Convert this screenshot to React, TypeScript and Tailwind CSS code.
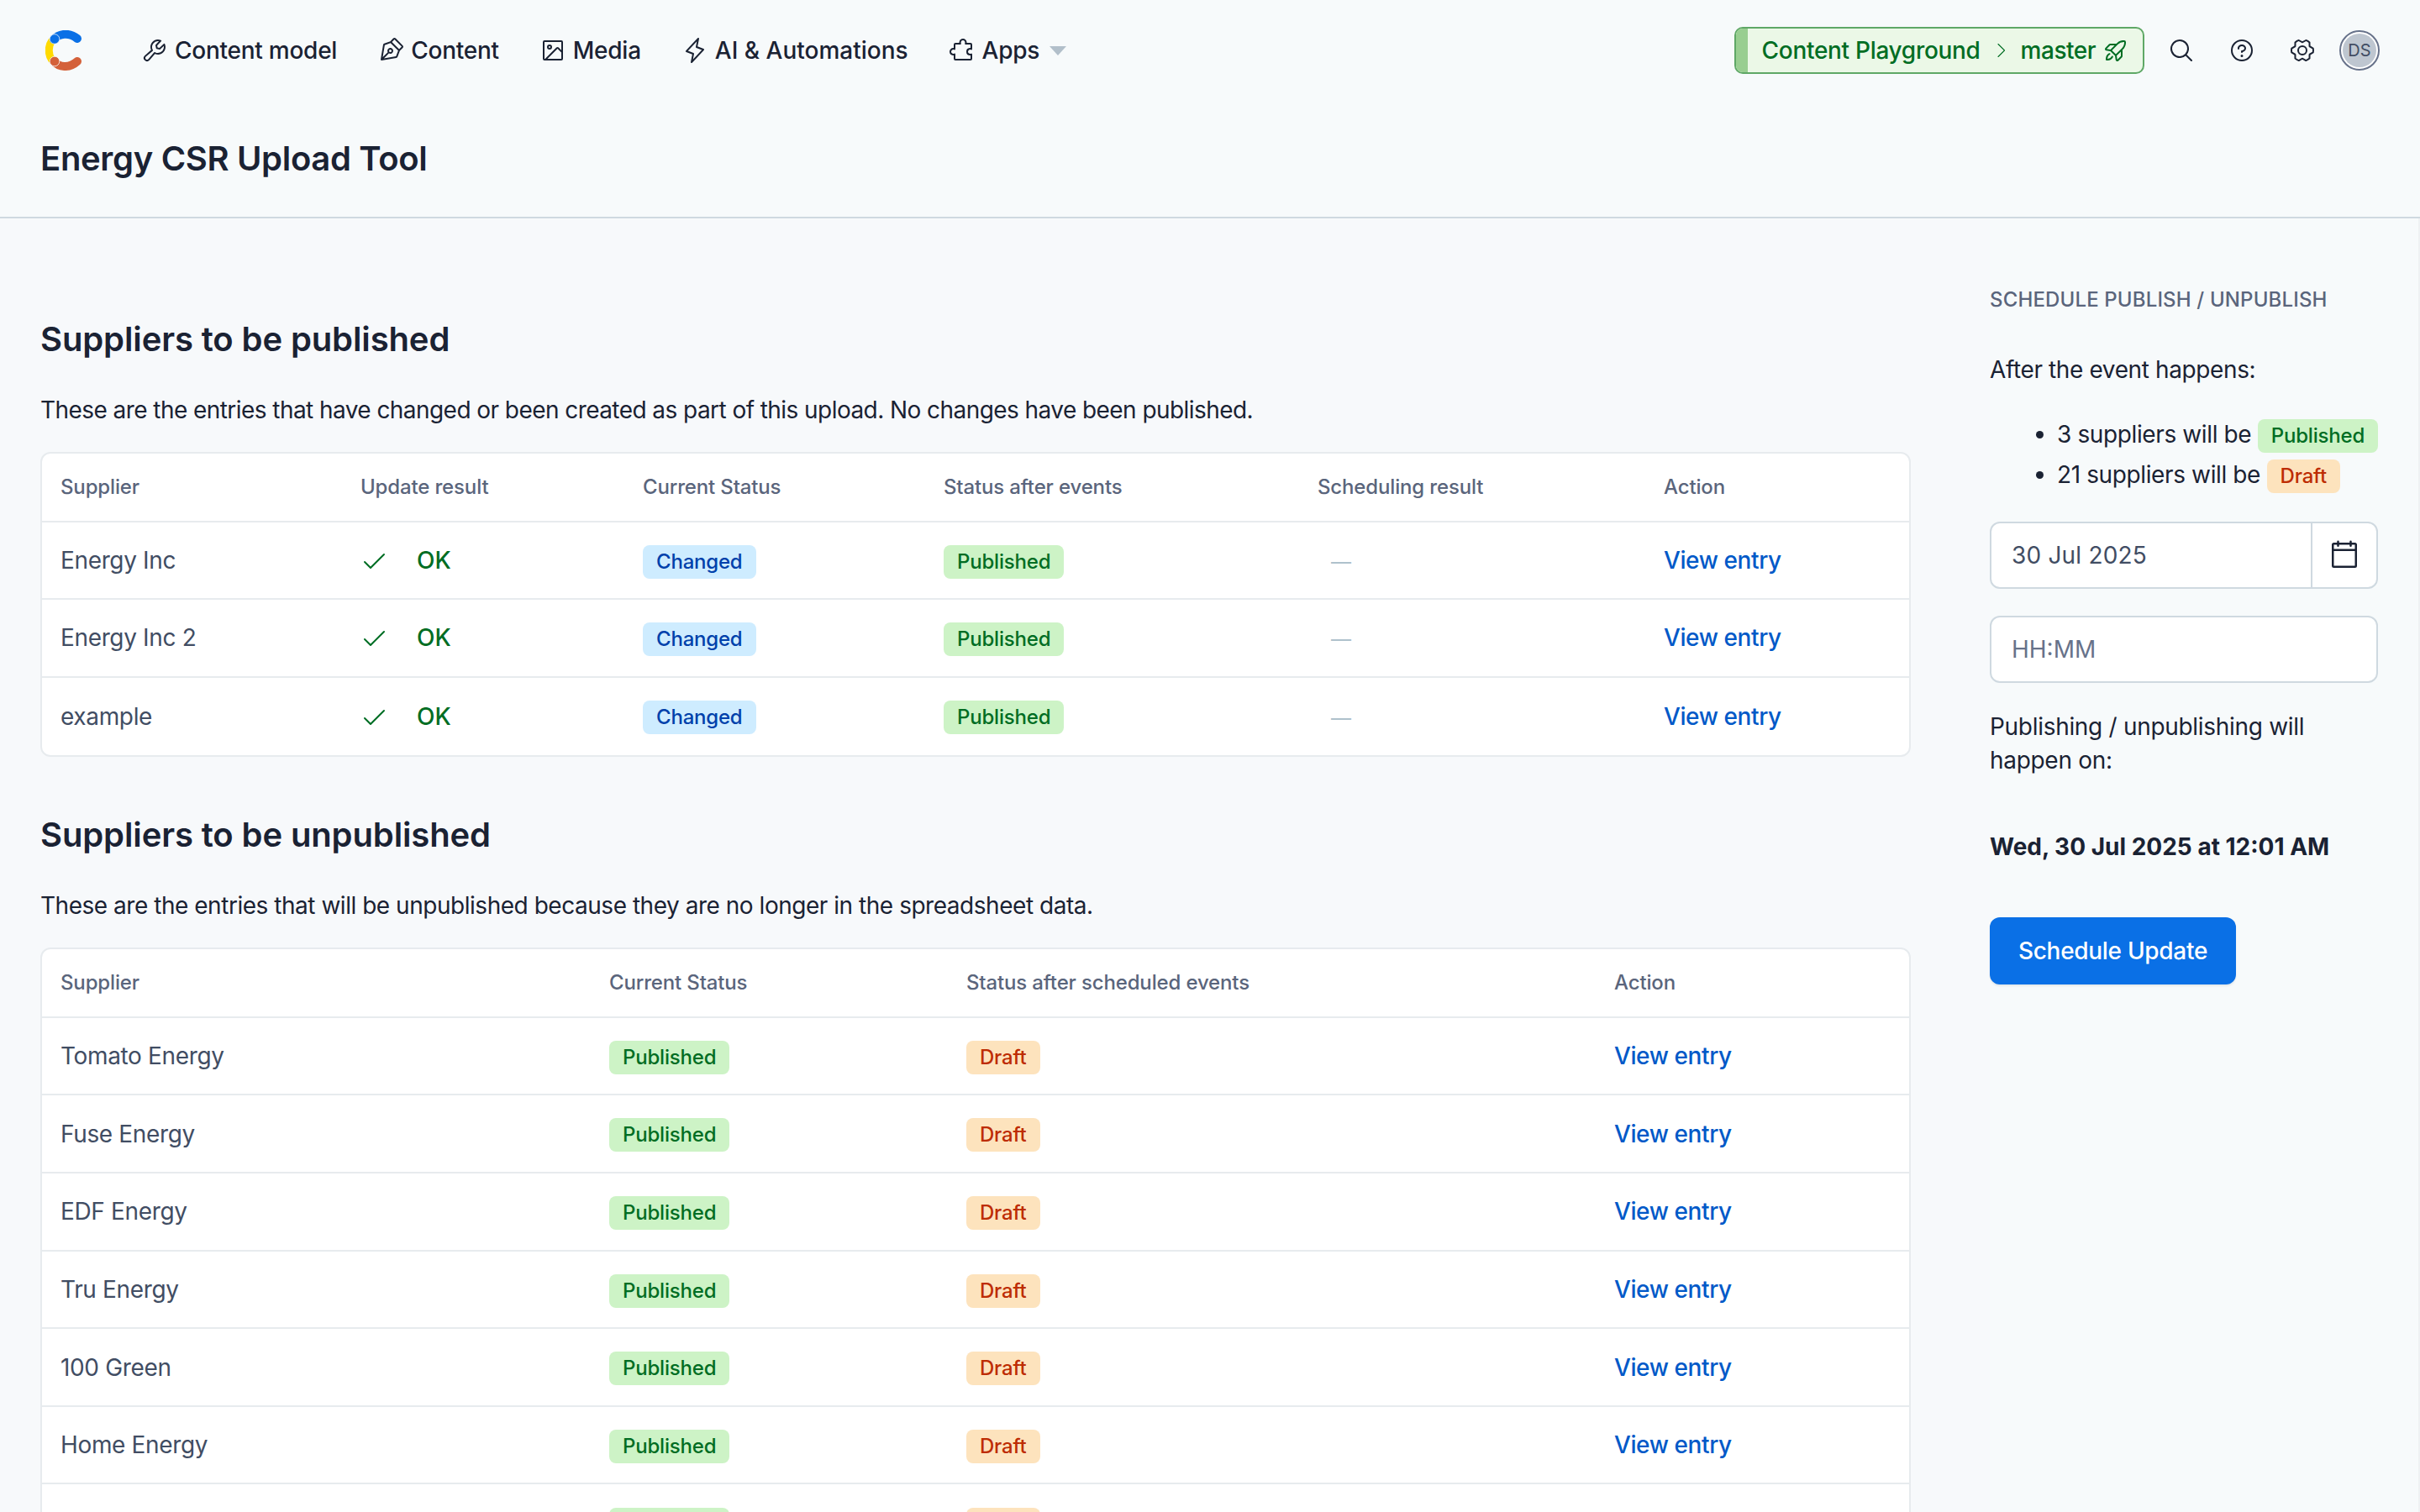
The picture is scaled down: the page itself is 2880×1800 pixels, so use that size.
import type { ReactNode } from "react";
import {
  PiCalendarBlank,
  PiCaretRightLight,
  PiCheck,
  PiGearSix,
  PiImageSquare,
  PiLightning,
  PiMagnifyingGlass,
  PiPenNib,
  PiPuzzlePiece,
  PiQuestion,
  PiRocketLaunch,
  PiWrench,
} from "react-icons/pi";

const published = [
  { name: "Energy Inc" },
  { name: "Energy Inc 2" },
  { name: "example" },
];

const unpublished = [
  "Tomato Energy",
  "Fuse Energy",
  "EDF Energy",
  "Tru Energy",
  "100 Green",
  "Home Energy",
  "",
];

function Logo() {
  return (
    <svg viewBox="0 0 44 48" className="h-[48px] w-[44px] shrink-0" fill="none">
      <path d="M8 12C3 19 3 29 8 36" stroke="#ffda00" strokeWidth="9" />
      <path d="M10 11C16 4 28 2 38 10" stroke="#0a70e6" strokeWidth="10" strokeLinecap="round" />
      <path d="M10 37C16 44 28 46 38 37" stroke="#d4613a" strokeWidth="10" strokeLinecap="round" />
      <circle cx="11" cy="10.5" r="5.8" fill="#0a70e6" stroke="#f7f9fa" strokeWidth="0.8" />
      <circle cx="11" cy="37" r="5.8" fill="#d4613a" stroke="#f7f9fa" strokeWidth="0.8" />
    </svg>
  );
}

function NavItem({ icon, label }: { icon: ReactNode; label: string }) {
  return (
    <div className="flex items-center gap-[8px] text-[28px] font-medium text-[#1a2233]">
      {icon}
      <span className={label.length > 13 ? "tracking-normal" : "tracking-[-0.25px]"}>{label}</span>
    </div>
  );
}

function Badge({ kind, children }: { kind: "blue" | "green" | "orange"; children: ReactNode }) {
  const tone = {
    blue: "bg-[#ceecff] text-[#0041ab]",
    green: "bg-[#cdf3c6] text-[#006d23]",
    orange: "bg-[#fde3bd] text-[#bd2c03]",
  }[kind];
  return (
    <span className={`inline-flex h-[40px] items-center rounded-[8px] px-[16px] text-[24px] font-medium tracking-[-0.2px] align-middle ${tone}`}>
      {children}
    </span>
  );
}

const th = "h-[82px] border-b-2 border-[#e7ebee] pl-[22px] text-left text-[24px] font-medium tracking-[-0.15px] text-[#5a657c]";
const cell = "border-b-2 border-[#e7ebee] pl-[22px] text-[28px] tracking-[-0.35px] text-[#414d63] group-last:border-b-0";
const td = `h-[92.3px] ${cell}`;
const tdWide = `h-[92.6px] ${cell}`;

function ViewEntry() {
  return <a className="text-[28px] font-medium tracking-[-0.4px] text-[#0059c8]">View entry</a>;
}

function TopBar() {
  return (
    <nav className="flex h-[120px] items-center pl-[54px] pr-[48px]">
      <Logo />
      <div className="ml-[70px] flex items-center gap-[48px]">
        <NavItem icon={<PiWrench className="size-[32px]" />} label="Content model" />
        <NavItem icon={<PiPenNib className="size-[32px]" />} label="Content" />
        <NavItem icon={<PiImageSquare className="size-[32px]" />} label="Media" />
        <NavItem icon={<PiLightning className="size-[32px]" />} label="AI & Automations" />
        <div className="flex items-center gap-[12px]">
          <NavItem icon={<PiPuzzlePiece className="size-[32px]" />} label="Apps" />
          <span className="h-0 w-0 border-x-[10px] border-t-[11px] border-x-transparent border-t-[#b2bfca]" />
        </div>
      </div>
      <div className="ml-auto flex items-center">
        <div className="flex h-[56px] items-center overflow-hidden rounded-[10px] border-2 border-[#5fa866] bg-[#ebf8e7] text-[28px] font-medium tracking-[-0.3px] text-[#006d23]">
          <span className="h-full w-[14px] bg-[#98ce90]" />
          <span className="ml-[17px]">Content Playground</span>
          <PiCaretRightLight className="mx-[12px] size-[24px]" />
          <span className="tracking-[-0.5px]">master</span>
          <PiRocketLaunch className="ml-[8px] mr-[16px] size-[32px]" />
        </div>
        <PiMagnifyingGlass className="ml-[28px] size-[32px] text-[#1a2233]" />
        <PiQuestion className="ml-[40px] size-[32px] text-[#1a2233]" />
        <PiGearSix className="ml-[40px] size-[32px] text-[#1a2233]" />
        <div className="ml-[28px] flex size-[48px] items-center justify-center rounded-full border-2 border-[#67728a] bg-white">
          <span className="flex size-[40px] items-center justify-center rounded-full bg-[#bec6d0] text-[20px] text-[#414d63]">
            DS
          </span>
        </div>
      </div>
    </nav>
  );
}

export default function App() {
  return (
    <div className="flex h-screen flex-col overflow-hidden bg-[#f7f9fb] font-['Inter',sans-serif] text-[#1a2233]">
      <header className="h-[260px] shrink-0 border-b-2 border-[#cfd9e0] bg-[#f7fafb]">
        <TopBar />
        <h1 className="mt-[49px] pl-[48px] text-[40px] leading-[40px] font-semibold tracking-[-0.33px]">Energy CSR Upload Tool</h1>
      </header>

      <div className="flex min-h-0 flex-1">
        <main className="w-[2368px] shrink-0 pl-[48px] pr-[94px] pt-[116px]">
          <h2 className="text-[40px] leading-[56px] font-semibold tracking-[-0.12px]">Suppliers to be published</h2>
          <p className="mt-[36px] text-[28px] leading-[40px] tracking-[-0.56px]">
            These are the entries that have changed or been created as part of this upload. No changes have been published.
          </p>
          <div className="mt-[30px] overflow-hidden rounded-[12px] border-2 border-[#e7ebee] bg-white">
            <table className="w-full table-fixed border-separate border-spacing-0">
              <thead>
                <tr>
                  <th className={`${th} w-[357px]`}>Supplier</th>
                  <th className={`${th} w-[336px]`}>Update result</th>
                  <th className={`${th} w-[358px]`}>Current Status</th>
                  <th className={`${th} w-[445px]`}>Status after events</th>
                  <th className={`${th} w-[412px]`}>Scheduling result</th>
                  <th className={th}>Action</th>
                </tr>
              </thead>
              <tbody>
                {published.map((row) => (
                  <tr key={row.name} className="group">
                    <td className={td}>{row.name}</td>
                    <td className={td}>
                      <span className="flex items-center text-[28px] font-medium tracking-normal text-[#006d23]">
                        <PiCheck className="size-[32px]" />
                        <span className="ml-[35px]">OK</span>
                      </span>
                    </td>
                    <td className={td}><Badge kind="blue">Changed</Badge></td>
                    <td className={td}><Badge kind="green">Published</Badge></td>
                    <td className={td}><span className="pl-[16px] text-[24px] text-[#aec1cc]">—</span></td>
                    <td className={td}><ViewEntry /></td>
                  </tr>
                ))}
              </tbody>
            </table>
          </div>

          <h2 className="mt-[65px] text-[40px] leading-[56px] font-semibold tracking-[-0.12px]">Suppliers to be unpublished</h2>
          <p className="mt-[36px] text-[28px] leading-[40px] tracking-[-0.47px]">
            These are the entries that will be unpublished because they are no longer in the spreadsheet data.
          </p>
          <div className="mt-[30px] overflow-hidden rounded-[12px] border-2 border-[#e7ebee] bg-white">
            <table className="w-full table-fixed border-separate border-spacing-0">
              <thead>
                <tr>
                  <th className={`${th} w-[653px]`}>Supplier</th>
                  <th className={`${th} w-[425px]`}>Current Status</th>
                  <th className={`${th} w-[771px]`}>Status after scheduled events</th>
                  <th className={th}>Action</th>
                </tr>
              </thead>
              <tbody>
                {unpublished.map((name, i) => (
                  <tr key={i} className="group">
                    <td className={tdWide}>{name}</td>
                    <td className={tdWide}><Badge kind="green">Published</Badge></td>
                    <td className={tdWide}><Badge kind="orange">Draft</Badge></td>
                    <td className={tdWide}>{name && <ViewEntry />}</td>
                  </tr>
                ))}
              </tbody>
            </table>
          </div>
        </main>

        <aside className="w-[512px] shrink-0 border-r-2 border-[#eef1f3] bg-[#f7fafb] pr-[48px] pt-[81px]">
          <h3 className="text-[24px] leading-[32px] font-medium tracking-[0.15px] text-[#5a657c]">SCHEDULE PUBLISH / UNPUBLISH</h3>
          <p className="mt-[47px] text-[28px] leading-[40px] tracking-[-0.38px]">After the event happens:</p>
          <ul className="mt-[33px] list-disc pl-[80px] text-[28px] leading-[48px] tracking-[-0.38px] whitespace-nowrap">
            <li>
              3 suppliers will be <Badge kind="green">Published</Badge>
            </li>
            <li>
              21 suppliers will be <Badge kind="orange">Draft</Badge>
            </li>
          </ul>
          <div className="mt-[32px] flex h-[80px] overflow-hidden rounded-[12px] border-2 border-[#cfd9e0] bg-white">
            <input
              readOnly
              value="30 Jul 2025"
              className="min-w-0 flex-1 bg-transparent px-[24px] text-[28px] tracking-[0.2px] text-[#414d63] outline-none"
            />
            <span className="flex w-[78px] items-center justify-center border-l-2 border-[#cfd9e0]">
              <PiCalendarBlank className="size-[40px] text-[#1a2233]" />
            </span>
          </div>
          <input
            placeholder="HH:MM"
            className="mt-[32px] block h-[80px] w-full rounded-[12px] border-2 border-[#cfd9e0] bg-white px-[24px] text-[28px] outline-none placeholder:text-[#67728a]"
          />
          <p className="mt-[32px] text-[28px] leading-[40px] tracking-[-0.3px]">Publishing / unpublishing will happen on:</p>
          <p className="mt-[63px] text-[28px] leading-[40px] font-bold">Wed, 30 Jul 2025 at 12:01 AM</p>
          <button className="mt-[64px] h-[80px] w-[293px] rounded-[12px] bg-[#0a70e6] text-[28px] font-medium tracking-[-0.3px] text-white shadow-[0_2px_2px_rgba(25,37,50,0.08)]">
            Schedule Update
          </button>
        </aside>
      </div>
    </div>
  );
}
